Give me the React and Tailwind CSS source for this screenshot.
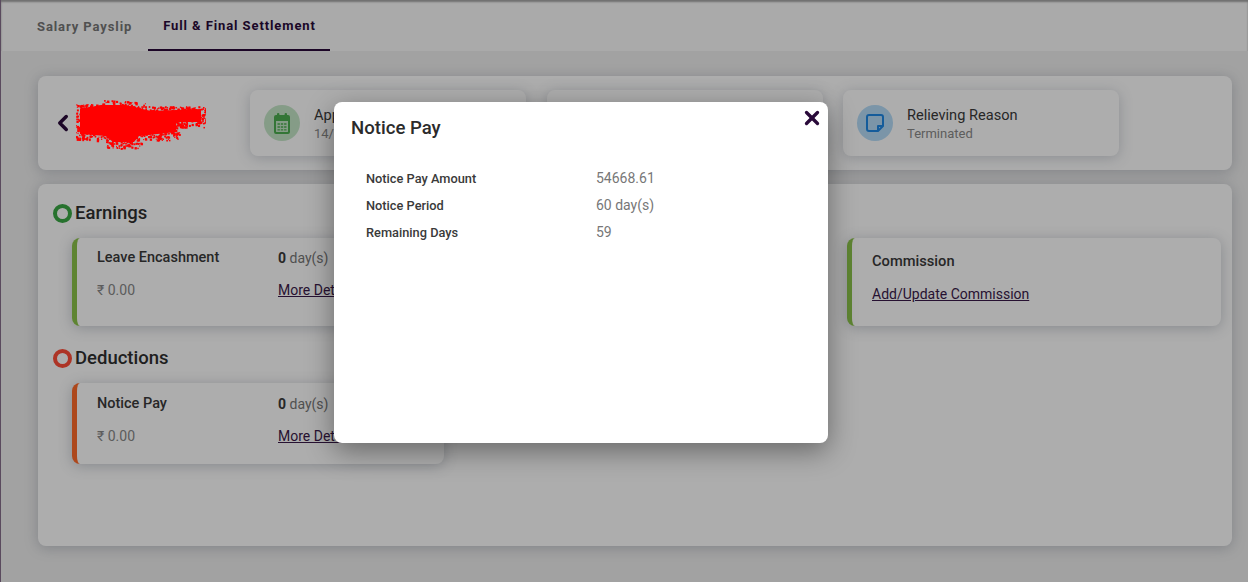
import { ChevronLeft, X } from 'lucide-react';

// the name in the reference is scribbled over with red, so speckle a red blob
const makeScribble = () => {
  const dots = [];
  let seed = 7;
  const rand = () => {
    seed = (seed * 16807) % 2147483647;
    return seed / 2147483647;
  };
  for (let i = 0; i < 1700; i++) {
    const x = rand() * 130;
    const y = rand() * 52;
    let top = 4;
    let bottom = 42;
    if (x < 25) top = 6;
    else if (x < 70) top = 1 + (x - 25) * 0.08;
    else top = 8;
    if (x > 103) bottom = 29;
    else if (x > 30 && x < 65) bottom = 50;
    if (y > top && y < bottom) dots.push({ x, y, s: 1 + rand() * 1.5 });
  }
  return dots;
};

const Scribble = () => (
  <svg width="130" height="52" viewBox="0 0 130 52" className="shrink-0">
    <path d="M4 11 L25 7 L50 7 L75 13 L125 11 L125 24 L100 24 L100 34 L63 38 L58 44 L37 44 L30 38 L4 36 Z" fill="#ff0000" />
    {makeScribble().map((d, i) => (
      <rect key={i} x={d.x} y={d.y} width={d.s} height={d.s} fill="#ff0000" />
    ))}
  </svg>
);

const CalendarIcon = () => (
  <svg width="24" height="24" viewBox="0 0 24 24" fill="#4caf50">
    <rect x="7" y="2" width="2.4" height="4" rx="1" />
    <rect x="14.6" y="2" width="2.4" height="4" rx="1" />
    <path d="M6 4h12a2 2 0 0 1 2 2v15a2 2 0 0 1-2 2H6a2 2 0 0 1-2-2V6a2 2 0 0 1 2-2zm0 6v10.6c0 .3.1.4.4.4h11.2c.3 0 .4-.1.4-.4V10H6z" />
    <g opacity="0.75">
      <rect x="7.5" y="12" width="2.4" height="2" />
      <rect x="10.8" y="12" width="2.4" height="2" />
      <rect x="14.1" y="12" width="2.4" height="2" />
      <rect x="7.5" y="15" width="2.4" height="2" />
      <rect x="10.8" y="15" width="2.4" height="2" />
      <rect x="14.1" y="15" width="2.4" height="2" />
      <rect x="7.5" y="18" width="2.4" height="1.6" />
      <rect x="10.8" y="18" width="2.4" height="1.6" />
      <rect x="14.1" y="18" width="2.4" height="1.6" />
    </g>
  </svg>
);

const NoteIcon = () => (
  <svg width="24" height="24" viewBox="0 0 24 24" fill="none" stroke="#1e88e5" strokeWidth="2" strokeLinejoin="round">
    <path d="M6 4h12a2 2 0 0 1 2 2v9l-5 5H6a2 2 0 0 1-2-2V6a2 2 0 0 1 2-2z" />
    <path d="M15 20v-5h5" />
  </svg>
);

const StatCard = ({ iconBg, icon, title, sub }) => (
  <div className="w-[276px] h-[66px] bg-white rounded-lg shadow-[0_2px_14px_rgba(80,90,110,0.28)] flex items-center pl-[14px] gap-[14px]">
    {icon && (
      <div className={`w-9 h-9 rounded-full flex items-center justify-center ${iconBg}`}>{icon}</div>
    )}
    <div className="flex flex-col pt-[2px]">
      <span className="text-[14.6px] leading-[19px] text-[#3a3a3a]">{title}</span>
      <span className="text-[13px] leading-[18px] text-[#8a8a8a]">{sub}</span>
    </div>
  </div>
);

const PayCard = ({ color, title, amount, height, top }) => (
  <div className={`${height} ${color} ${top} bg-white rounded-lg border-l-[5px] shadow-[0_2px_14px_rgba(80,90,110,0.32)] pl-5`}>
    <div className="flex items-center h-[18px] text-[14.5px]">
      <span className="w-[181px] font-medium text-[#3a3a3a]">{title}</span>
      <span className="text-[14px] text-[#777]">
        <b className="font-bold text-[#3a3a3a]">0</b> day(s)
      </span>
    </div>
    <div className="flex items-center h-[18px] mt-[14px] text-[14px]">
      <span className="w-[181px] text-[#888]">{amount}</span>
      <a className="underline text-[#3a1a4a]">More Details</a>
    </div>
  </div>
);

const Heading = ({ ring, children }) => (
  <div className="flex items-center gap-[3px] pl-[15px] h-6">
    <span className={`w-[19px] h-[19px] mt-0.5 rounded-full border-[4px] ${ring}`}></span>
    <h2 className="pt-1 text-[18.5px] font-medium text-[#2f2f2f]">{children}</h2>
  </div>
);

const DetailRow = ({ label, value }) => (
  <div className="flex items-center h-[27px]">
    <span className="w-[230px] text-[12.8px] font-medium text-[#3a3a3a]">{label}</span>
    <span className="text-[14px] text-[#777]">{value}</span>
  </div>
);

const App = () => {
  return (
    <div className="relative w-[1248px] h-[582px] overflow-hidden bg-[#efefef] border-l border-[#5a4a5e]" style={{ fontFamily: 'Roboto, sans-serif' }}>
      <div className="h-[51px] bg-[#fbfbfb] flex pl-[21px] shadow-[inset_0_2px_2px_rgba(0,0,0,0.35)]">
        <div className="h-full pl-[15px] pr-4 pt-[2px] flex items-center text-[13px] font-bold tracking-[0.9px] text-[#777]">Salary Payslip</div>
        <div className="h-full pl-[15px] pr-[14px] pt-[2px] flex items-center text-[13px] font-bold tracking-[0.9px] text-[#2a0a3a] border-b-2 border-[#2a0a3a]">Full &amp; Final Settlement</div>
      </div>

      <div className="pt-[25px] pl-[37px] pr-4">
        <div className="h-[94px] bg-white rounded-lg shadow-[0_2px_14px_rgba(80,90,110,0.3)] flex items-center pl-3">
          <ChevronLeft size={26} strokeWidth={3.2} className="text-[#2a0a3a] shrink-0" />
          <div className="relative z-10 mt-[2px] mr-[44px]">
            <Scribble />
          </div>
          <div className="flex gap-[20.5px]">
            <StatCard iconBg="bg-[#c5e6c8]" icon={<CalendarIcon />} title="Applied Date" sub="14/01/2022" />
            <StatCard />
            <StatCard iconBg="bg-[#b5dcf8]" icon={<NoteIcon />} title="Relieving Reason" sub="Terminated" />
          </div>
        </div>

        <div className="h-[362px] mt-[14px] bg-white rounded-lg shadow-[0_2px_14px_rgba(80,90,110,0.3)] pt-4 pr-[11px]">
          <Heading ring="border-[#3aa845]">Earnings</Heading>
          <div className="grid grid-cols-[372px_373px_374px] gap-x-[15px] pl-[34px] mt-[14px]">
            <PayCard color="border-[#8bc34a]" top="pt-[11px]" title="Leave Encashment" amount="₹ 0.00" height="h-[88px]" />
            <div></div>
            <div className="h-[88px] bg-white rounded-lg border-l-[5px] border-[#8bc34a] shadow-[0_2px_14px_rgba(80,90,110,0.32)] pl-5 pt-[14px]">
              <div className="h-[18px] flex items-center text-[14.7px] font-medium text-[#3a3a3a]">Commission</div>
              <a className="block h-[18px] mt-[15px] leading-[18px] text-[14px] underline text-[#3a1a4a]">Add/Update Commission</a>
            </div>
          </div>
          <div className="mt-[19px]">
            <Heading ring="border-[#ff4d38]">Deductions</Heading>
          </div>
          <div className="pl-[34px] mt-[14px]">
            <div className="w-[372px]">
              <PayCard color="border-[#ff6a2a]" top="pt-3" title="Notice Pay" amount="₹ 0.00" height="h-[81px]" />
            </div>
          </div>
        </div>
      </div>

      {/* dim layer behind the dialog */}
      <div className="absolute inset-0 bg-black/[0.32]"></div>

      <div className="absolute left-[333px] top-[102px] w-[494px] h-[341px] bg-white rounded-lg shadow-[0_8px_28px_rgba(0,0,0,0.4)] pl-[17px] pt-[15px]">
        <h3 className="text-[18.6px] leading-[22px] font-medium text-[#2b2b2b]">Notice Pay</h3>
        <button className="absolute right-[5px] top-[5px] text-[#2a0a3a]">
          <X size={22} strokeWidth={3.6} />
        </button>
        <div className="pl-[15px] mt-[26px]">
          <DetailRow label="Notice Pay Amount" value="54668.61" />
          <DetailRow label="Notice Period" value="60 day(s)" />
          <DetailRow label="Remaining Days" value="59" />
        </div>
      </div>
    </div>
  );
};

export default App;
